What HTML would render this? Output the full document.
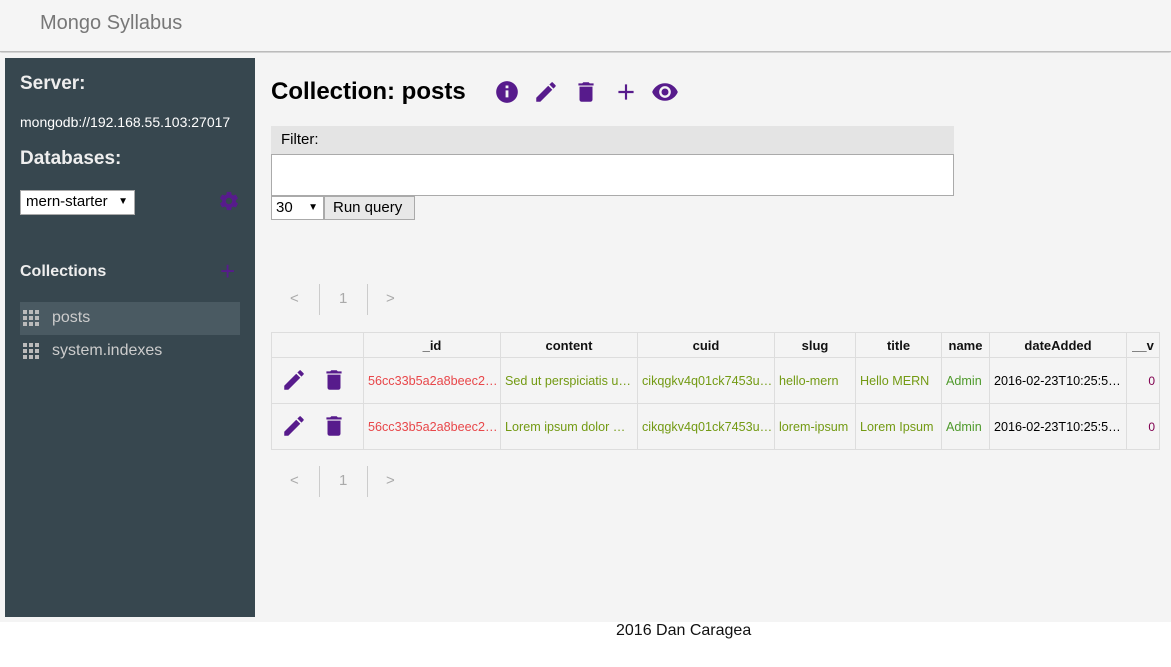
<!DOCTYPE html>
<html><head><meta charset="utf-8"><style>
*{box-sizing:border-box;margin:0;padding:0}
body{width:1171px;height:667px;background:#fff;font-family:"Liberation Sans",Arial,sans-serif;position:relative;overflow:hidden}
.a{position:absolute}
#hdr{left:0;top:0;width:1171px;height:52px;background:#f5f5f5;border-bottom:1px solid #bbb;box-shadow:0 1px 2px rgba(0,0,0,.25)}
#main{left:0;top:53px;width:1171px;height:569px;background:#f4f4f4}
#side{left:5px;top:58px;width:250px;height:559px;background:#37474f;color:#fff}
svg.i{position:absolute;fill:#571b8c}
table{border-collapse:collapse;position:absolute;left:271px;top:332px;font-size:13px;table-layout:fixed;width:888px}
td,th{border:1px solid #ddd;height:46px;padding:0 4px;white-space:nowrap;overflow:hidden}
td{font-size:12.6px}
th{height:25px;font-weight:bold;color:#111;text-align:center}
.r{color:#e8474a}.g{color:#739a13}.n{color:#4f9a2c}
.pg{color:#aaa;font-size:15px}
</style></head><body>
<div id="hdr" class="a"><div class="a" style="left:40px;top:12px;font-size:20px;color:#777">Mongo Syllabus</div></div>
<div id="main" class="a"></div>
<div id="side" class="a">
<div class="a" style="left:15px;top:15px;font-size:19px;font-weight:bold;color:#eee">Server:</div>
<div class="a" style="left:15px;top:56px;font-size:14px">mongodb://192.168.55.103:27017</div>
<div class="a" style="left:15px;top:90px;font-size:19px;font-weight:bold;color:#eee">Databases:</div>
<div class="a" style="left:15px;top:132px;width:115px;height:25px;background:#fff;border:1px solid #aaa;color:#000;font-size:15px;padding:2px 5px">mern-starter<span style="position:absolute;right:6px;top:5px;font-size:10px">▼</span></div>
<svg class="i" style="left:213px;top:132px" width="22" height="22" viewBox="0 0 24 24"><path d="M19.4 13c.04-.33.06-.66.06-1s-.02-.67-.06-1l2.1-1.65c.2-.15.25-.42.12-.64l-2-3.46c-.12-.22-.39-.3-.61-.22l-2.49 1c-.52-.4-1.08-.73-1.69-.98l-.38-2.65A.49.49 0 0 0 14 2h-4c-.25 0-.46.18-.49.42l-.38 2.65c-.61.25-1.17.59-1.69.98l-2.49-1c-.23-.09-.49 0-.61.22l-2 3.46c-.13.22-.07.49.12.64L4.57 11c-.04.33-.07.67-.07 1s.03.67.07 1l-2.11 1.65c-.19.15-.24.42-.12.64l2 3.46c.12.22.39.3.61.22l2.49-1c.52.4 1.08.73 1.69.98l.38 2.65c.03.24.24.42.49.42h4c.25 0 .46-.18.49-.42l.38-2.65c.61-.25 1.17-.59 1.69-.98l2.49 1c.23.09.49 0 .61-.22l2-3.46c.12-.22.07-.49-.12-.64L19.4 13zM12 15.5A3.5 3.5 0 1 1 12 8.5a3.5 3.5 0 0 1 0 7z"/></svg>
<div class="a" style="left:15px;top:205px;font-size:16px;font-weight:bold;color:#eee">Collections</div>
<div class="a" style="left:215px;top:199px;font-size:26px;color:#571b8c;line-height:28px">+</div>
<div class="a" style="left:15px;top:244px;width:220px;height:33px;background:#4a5a62"></div>
<div class="a" style="left:18px;top:252px;width:16px;height:16px;background:repeating-linear-gradient(90deg,#bbb 0 4px,transparent 4px 6px);-webkit-mask:repeating-linear-gradient(0deg,#000 0 4px,transparent 4px 6px)"></div>
<div class="a" style="left:47px;top:251px;font-size:16px;color:#ccc">posts</div>
<div class="a" style="left:18px;top:285px;width:16px;height:16px;background:repeating-linear-gradient(90deg,#bbb 0 4px,transparent 4px 6px);-webkit-mask:repeating-linear-gradient(0deg,#000 0 4px,transparent 4px 6px)"></div>
<div class="a" style="left:47px;top:284px;font-size:16px;color:#ccc">system.indexes</div>
</div>
<div class="a" style="left:271px;top:78px;font-size:24px;font-weight:bold;color:#000">Collection: posts</div>
<svg class="i" style="left:494px;top:79px" width="26" height="26" viewBox="0 0 24 24"><path d="M12 2a10 10 0 1 0 0 20 10 10 0 0 0 0-20zm1.3 15h-2.6v-6.5h2.6V17zm0-8.5h-2.6V6h2.6v2.5z"/></svg>
<svg class="i" style="left:533px;top:79px" width="26" height="26" viewBox="0 0 24 24"><path d="M3 17.25V21h3.75L17.81 9.94l-3.75-3.75L3 17.25zM20.71 7.04a1 1 0 0 0 0-1.41l-2.34-2.34a1 1 0 0 0-1.41 0l-1.83 1.83 3.75 3.75 1.83-1.83z"/></svg>
<svg class="i" style="left:573px;top:79px" width="26" height="26" viewBox="0 0 24 24"><path d="M6 19c0 1.1.9 2 2 2h8c1.1 0 2-.9 2-2V7H6v12zM19 4h-3.5l-1-1h-5l-1 1H5v2h14V4z"/></svg>
<svg class="i" style="left:613px;top:79px" width="26" height="26" viewBox="0 0 24 24"><path d="M19 13h-6v6h-2v-6H5v-2h6V5h2v6h6v2z"/></svg>
<svg class="i" style="left:651px;top:78px" width="28" height="28" viewBox="0 0 24 24"><path d="M12 4.5C7 4.5 2.73 7.61 1 12c1.73 4.39 6 7.5 11 7.5s9.27-3.11 11-7.5c-1.73-4.39-6-7.5-11-7.5zM12 17a5 5 0 1 1 0-10 5 5 0 0 1 0 10zm0-8a3 3 0 1 0 0 6 3 3 0 0 0 0-6z"/></svg>
<div class="a" style="left:271px;top:126px;width:683px;height:28px;background:#e4e4e4;font-size:15px;padding:5px 10px">Filter:</div>
<div class="a" style="left:271px;top:154px;width:683px;height:42px;background:#fff;border:1px solid #aaa"></div>
<div class="a" style="left:271px;top:196px;width:53px;height:24px;background:#fff;border:1px solid #aaa;font-size:15px;padding:2px 4px">30<span style="position:absolute;right:5px;top:5px;font-size:10px">▼</span></div>
<div class="a" style="left:324px;top:196px;width:91px;height:24px;background:#e8e8e8;border:1px solid #aaa;font-size:15px;padding:2px 8px">Run query</div>
<div class="a pg" style="left:290px;top:290px">&lt;</div>
<div class="a" style="left:319px;top:284px;width:1px;height:31px;background:#ccc"></div>
<div class="a pg" style="left:339px;top:290px">1</div>
<div class="a" style="left:367px;top:284px;width:1px;height:31px;background:#ccc"></div>
<div class="a pg" style="left:386px;top:290px">&gt;</div>
<table>
<colgroup><col style="width:92px"><col style="width:137px"><col style="width:137px"><col style="width:137px"><col style="width:81px"><col style="width:86px"><col style="width:48px"><col style="width:137px"><col style="width:33px"></colgroup>
<tr><th></th><th>_id</th><th>content</th><th>cuid</th><th>slug</th><th>title</th><th>name</th><th>dateAdded</th><th style="padding:0 3px">__v</th></tr>
<tr><td></td><td class="r">56cc33b5a2a8beec2…</td><td class="g">Sed ut perspiciatis u…</td><td class="g">cikqgkv4q01ck7453u…</td><td class="g">hello-mern</td><td class="g">Hello MERN</td><td class="n">Admin</td><td>2016-02-23T10:25:5…</td><td style="text-align:right;color:#800050;font-size:12px">0</td></tr>
<tr><td></td><td class="r">56cc33b5a2a8beec2…</td><td class="g">Lorem ipsum dolor …</td><td class="g">cikqgkv4q01ck7453u…</td><td class="g">lorem-ipsum</td><td class="g">Lorem Ipsum</td><td class="n">Admin</td><td>2016-02-23T10:25:5…</td><td style="text-align:right;color:#800050;font-size:12px">0</td></tr>
</table>
<svg class="i" style="left:281px;top:367px" width="26" height="26" viewBox="0 0 24 24"><path d="M3 17.25V21h3.75L17.81 9.94l-3.75-3.75L3 17.25zM20.71 7.04a1 1 0 0 0 0-1.41l-2.34-2.34a1 1 0 0 0-1.41 0l-1.83 1.83 3.75 3.75 1.83-1.83z"/></svg>
<svg class="i" style="left:321px;top:367px" width="26" height="26" viewBox="0 0 24 24"><path d="M6 19c0 1.1.9 2 2 2h8c1.1 0 2-.9 2-2V7H6v12zM19 4h-3.5l-1-1h-5l-1 1H5v2h14V4z"/></svg>
<svg class="i" style="left:281px;top:413px" width="26" height="26" viewBox="0 0 24 24"><path d="M3 17.25V21h3.75L17.81 9.94l-3.75-3.75L3 17.25zM20.71 7.04a1 1 0 0 0 0-1.41l-2.34-2.34a1 1 0 0 0-1.41 0l-1.83 1.83 3.75 3.75 1.83-1.83z"/></svg>
<svg class="i" style="left:321px;top:413px" width="26" height="26" viewBox="0 0 24 24"><path d="M6 19c0 1.1.9 2 2 2h8c1.1 0 2-.9 2-2V7H6v12zM19 4h-3.5l-1-1h-5l-1 1H5v2h14V4z"/></svg>
<div class="a pg" style="left:290px;top:472px">&lt;</div>
<div class="a" style="left:319px;top:466px;width:1px;height:31px;background:#ccc"></div>
<div class="a pg" style="left:339px;top:472px">1</div>
<div class="a" style="left:367px;top:466px;width:1px;height:31px;background:#ccc"></div>
<div class="a pg" style="left:386px;top:472px">&gt;</div>
<div class="a" style="left:616px;top:622px;font-size:16px;color:#111">2016 Dan Caragea</div>
</body></html>
